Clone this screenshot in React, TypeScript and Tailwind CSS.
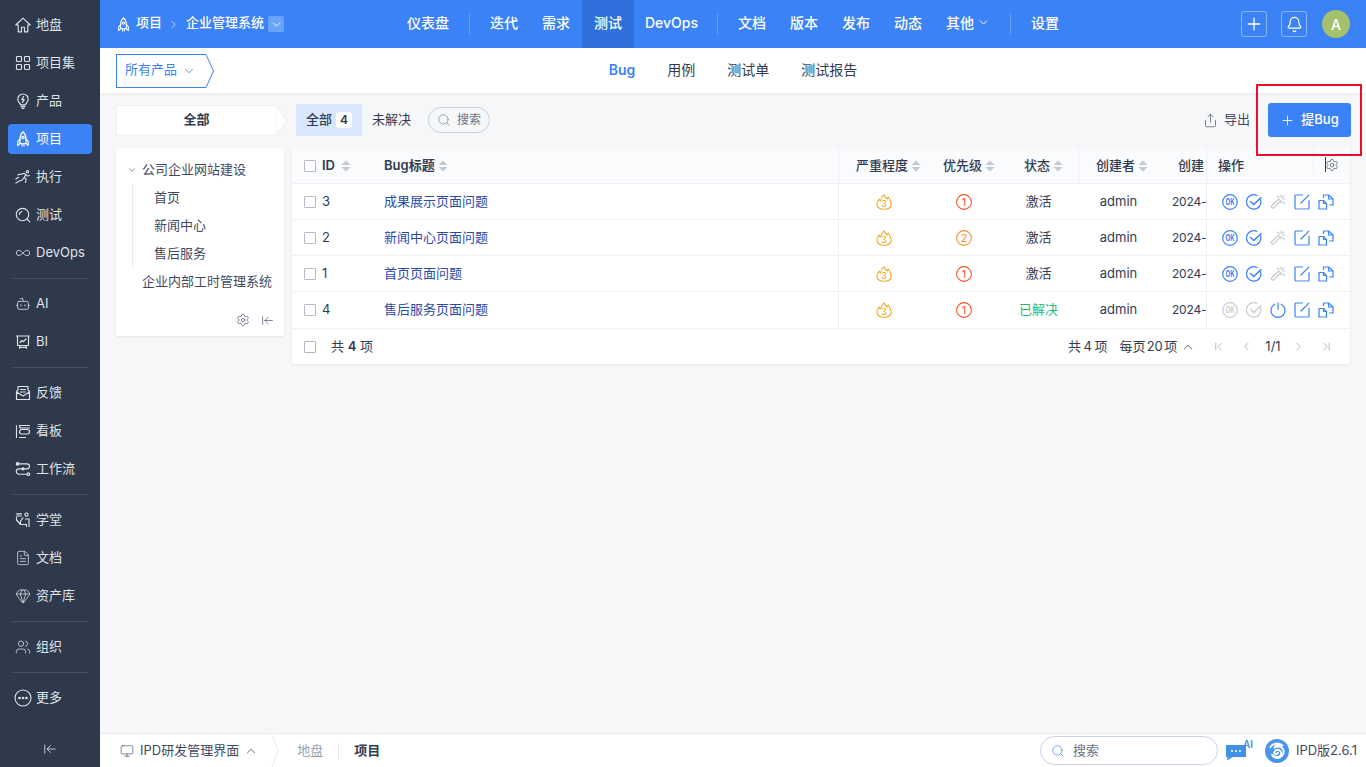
import React from "react";
import {
  Search, Infinity as InfinityIcon, Bot, FileText, Gem, Users, ArrowLeftToLine,
  ChevronDown, ChevronUp, ChevronRight, ChevronLeft, Plus, Bell, Settings, Share, Monitor, ChevronFirst, ChevronLast,
} from "lucide-react";

type P = { className?: string };
const Sv = ({ className, children, s = 16 }: P & { children: React.ReactNode; s?: number }) => (
  <svg viewBox="0 0 16 16" width={s} height={s} fill="none" stroke="currentColor" strokeWidth={1.15} strokeLinecap="round" strokeLinejoin="round" className={className}>
    {children}
  </svg>
);

const HomeI = () => (
  <Sv>
    <path d="M8 1.2 .8 8H3.200V14.800H6.500V10.200H9.500V14.800H12.800V8H15.200Z" />
  </Sv>
);
const Grid4 = () => (
  <Sv>
    <rect x="1.500" y="1.500" width="5" height="5" rx=".8" />
    <rect x="9.500" y="1.500" width="5" height="5" rx=".8" />
    <rect x="1.500" y="9.500" width="5" height="5" rx=".8" />
    <rect x="9.500" y="9.500" width="5" height="5" rx=".8" />
  </Sv>
);
const RocketUp = ({ className, s = 16 }: P & { s?: number }) => (
  <Sv className={className} s={s}>
    <path d="M8 .8C10.200 2.800 11 5.200 11 7.800V12.500H5V7.800C5 5.200 5.800 2.800 8 .8Z" />
    <circle cx="8" cy="6.500" r="1.200" />
    <path d="M5 8 2.800 10.500V14.500L5 12.500M11 8l2.200 2.500v4L11 12.500M7 13v2M9 13v2" />
  </Sv>
);
const Bulb = () => (
  <Sv>
    <path d="M5.600 11.800C5.400 10.400 2.800 9.400 2.800 6.200a5.200 5.200 0 0 1 10.400 0c0 3.200-2.600 4.200-2.800 5.600ZM6 13.600h4M7 15.300h2" />
    <path d="M8.600 3.600 6.800 6.600h2.400L7.400 9.400" />
  </Sv>
);
const Runner = () => (
  <Sv>
    <circle cx="12.500" cy="2.800" r="1.200" />
    <path d="M5.500 5.500 9 4.200l1.800 1.300-1.700 3 2 1.500-.6 3.500M9.100 8.500 7 11.200 3.200 12.200M10.800 5.500l1.200 1.500 2.500-.5M.8 10l2.700-1.700M.8 14l2-1M2.800 6l2-1" />
  </Sv>
);
const Lens = () => (
  <Sv>
    <circle cx="7.500" cy="7.500" r="6.200" />
    <path d="M12 12l2.800 2.800M4.500 7.500A3 3 0 0 1 7 4.500" />
  </Sv>
);
const Board = () => (
  <Sv>
    <path d="M1.500 2.500V14.500M4.500 2.500h10M4.500 14.500h6" />
    <rect x="4.500" y="6.500" width="10" height="4.500" rx="2.200" />
    <path d="M4.500 2.500C4.500 4 5 5 6 5h8.500" />
  </Sv>
);
const Flow = () => (
  <Sv>
    <circle cx="2.600" cy="2.800" r="1.300" fill="currentColor" />
    <path d="M4 2.800h8a2.400 2.400 0 0 1 0 5H4a2.600 2.600 0 0 0 0 5.400h8" />
    <circle cx="13.400" cy="13.200" r="1.300" />
    <circle cx="8" cy="7.800" r="1" fill="currentColor" />
  </Sv>
);
const School = () => (
  <Sv>
    <circle cx="11.500" cy="2.600" r="1.600" />
    <path d="M1.500 4h5M1.500 1.800h5M1.500 5.500v2.500l4 4.500h6v2M5.500 12.500V9L8 5.800M10.500 7h3.500v7.500" />
  </Sv>
);
const Pres = () => (
  <Sv>
    <path d="M1.500 2h13M2.500 2v9.500h11V2M5 11.500 4.500 14.500M11 11.500l.5 3M4.800 13.300h6.400" />
    <path d="M5 8.500 7 6.500l1.400 1.200L11 5" />
  </Sv>
);
const Feedback = () => (
  <Sv>
    <path d="M3 5V1.500h10V5M3 5 1.500 6.500v8h13v-8L13 5M1.500 7 8 11l6.500-4M5.500 4.500h5M5.500 7h5" />
  </Sv>
);
const More = () => (
  <svg viewBox="0 0 18 18" width="18" height="18" fill="none" stroke="currentColor" strokeWidth="1.100" className="-ml-px shrink-0">
    <circle cx="9" cy="9" r="8" />
    <circle cx="5.500" cy="9" r=".8" fill="currentColor" />
    <circle cx="9" cy="9" r=".8" fill="currentColor" />
    <circle cx="12.500" cy="9" r=".8" fill="currentColor" />
  </svg>
);

const i16 = { size: 16, strokeWidth: 1.15 };
const side: (null | { t: string; i: React.ReactNode; a?: boolean })[] = [
  { t: "地盘", i: <HomeI /> },
  { t: "项目集", i: <Grid4 /> },
  { t: "产品", i: <Bulb /> },
  { t: "项目", i: <RocketUp />, a: true },
  { t: "执行", i: <Runner /> },
  { t: "测试", i: <Lens /> },
  { t: "DevOps", i: <InfinityIcon {...i16} /> },
  null,
  { t: "AI", i: <Bot {...i16} /> },
  { t: "BI", i: <Pres /> },
  null,
  { t: "反馈", i: <Feedback /> },
  { t: "看板", i: <Board /> },
  { t: "工作流", i: <Flow /> },
  null,
  { t: "学堂", i: <School /> },
  { t: "文档", i: <FileText {...i16} /> },
  { t: "资产库", i: <Gem {...i16} /> },
  null,
  { t: "组织", i: <Users {...i16} /> },
  null,
  { t: "更多", i: <More /> },
];

const Sidebar = () => (
  <aside className="w-[100px] shrink-0 bg-[#2f394c] text-[#dfe3e9] text-[13px] pt-[6px] flex flex-col">
    {side.map((s, n) =>
      s === null ? (
        <div key={n} className="h-px my-[6px] mx-3 bg-[#465062]" />
      ) : (
        <div key={n} className="h-[38px] flex items-center">
          <div className={`mx-2 w-[84px] h-[30px] rounded-[4px] flex items-center gap-[5px] pl-[7px] ${s.a ? "bg-[#3b82f6] text-white" : ""}`}>
            <span className="w-4 h-4 flex items-center">{s.i}</span>
            <span className="pb-px">{s.t}</span>
          </div>
        </div>
      )
    )}
    <div className="mt-auto h-[36px] flex items-center justify-center">
      <ArrowLeftToLine size={14} strokeWidth={1.4} />
    </div>
  </aside>
);

const TopSep = () => <div className="w-px h-5 mx-2 bg-[#6aa3fa]" />;
const TopItem = ({ t, a, c }: { t: string; a?: boolean; c?: boolean }) => (
  <div className={`h-12 flex items-center justify-center gap-[3px] pb-[3px] ${t === "DevOps" ? "w-[75px]" : "px-3"} ${a ? "bg-[#2f70dc]" : ""}`}>
    {t}
    {c && <ChevronDown size={13} strokeWidth={1.8} />}
  </div>
);

const Header = () => (
  <header className="h-12 shrink-0 bg-[#3b82f6] text-white text-[14px] flex items-center">
    <div className="w-[295px] shrink-0 pl-4 flex items-center text-[13px] font-medium">
      <RocketUp s={15} />
      <span className="ml-[5px] pb-[2px]">项目</span>
      <ChevronRight size={13} strokeWidth={1.6} className="mx-[5px] text-[#dbe8fd]" />
      <span className="pb-[2px] ml-px">企业管理系统</span>
      <span className="ml-1 w-4 h-4 rounded-[2px] bg-[#6aa3fa] flex items-center justify-center">
        <ChevronDown size={13} strokeWidth={1.6} />
      </span>
    </div>
    <nav className="flex items-center font-medium">
      <TopItem t="仪表盘" />
      <TopSep />
      <TopItem t="迭代" />
      <TopItem t="需求" />
      <TopItem t="测试" a />
      <TopItem t="DevOps" />
      <TopSep />
      <TopItem t="文档" />
      <TopItem t="版本" />
      <TopItem t="发布" />
      <TopItem t="动态" />
      <TopItem t="其他" c />
      <TopSep />
      <TopItem t="设置" />
    </nav>
    <div className="ml-auto pr-4 flex items-center">
      <div className="w-[26px] h-[26px] rounded-[3px] border border-[#8ab6fa] flex items-center justify-center">
        <Plus size={20} strokeWidth={1.6} />
      </div>
      <div className="ml-[14px] w-[26px] h-[26px] rounded-[3px] border border-[#8ab6fa] flex items-center justify-center">
        <Bell size={17} strokeWidth={1.7} />
      </div>
      <div className="ml-[15px] w-7 h-7 rounded-full bg-[#a5c16d] flex items-center justify-center text-[14px] font-medium">A</div>
    </div>
  </header>
);

const SubBar = () => (
  <div className="h-[45px] shrink-0 bg-white shadow-[0_1px_3px_rgba(0,0,0,0.06)] grid grid-cols-[1fr_auto_1fr] items-center px-4 relative">
    <div className="flex items-center h-[34px]">
      <div className="w-[90px] h-[34px] border border-r-0 border-[#3b82f6] flex items-center pl-[8px] gap-[5px] text-[13px] text-[#3b82f6]">
        <span className="pb-[2px]">所有产品</span>
        <ChevronDown size={14} strokeWidth={1.5} />
      </div>
      <svg width="8" height="34" viewBox="0 0 8 34" fill="none" className="shrink-0">
        <path d="M0 .5 7.500 17 0 33.500" stroke="#3b82f6" />
      </svg>
    </div>
    <div className="flex items-center gap-8 text-[14px] text-[#313c52] pb-[2px]">
      <span className="text-[#3b82f6] font-semibold">Bug</span>
      <span>用例</span>
      <span>测试单</span>
      <span>测试报告</span>
    </div>
    <div />
  </div>
);

const Sort = () => (
  <svg width="10" height="12" viewBox="0 0 10 12" className="shrink-0">
    <path d="M5 0.500 9.500 5H.5ZM5 11.500.5 7h9Z" fill="#c4c8cf" />
  </svg>
);
const Check = ({ className = "" }: P) => <span className={`w-3 h-3 shrink-0 border border-[#b4bac5] rounded-[1px] bg-white ${className}`} />;

const Fire = () => (
  <svg viewBox="0 0 16 16" width="16" height="16" fill="none" stroke="#f5a623" strokeWidth="1.100" strokeLinejoin="round">
    <path d="M8 .8C8.800 3 10 3.800 11 5 11.500 4.400 12 3.800 12.200 3 14 5 15.200 7.500 15.200 10 15.200 13.500 12 15.300 8 15.300S.8 13.500.8 10C.8 8 2 6.500 3.200 5.200 3.500 6 3.800 6.500 4.400 7 4.800 4.500 6 2.500 8 .8Z" />
    <text x="8" y="13.300" textAnchor="middle" fontSize="8.500" fontWeight="500" fill="#f5a623" stroke="none">3</text>
  </svg>
);
const Pri = ({ n }: { n: number }) => (
  <svg viewBox="0 0 16 16" width="16" height="16" fill="none" stroke={n === 1 ? "#f0512d" : "#f5902e"} strokeWidth="1.100">
    <circle cx="8" cy="8" r="7.400" />
    <text x="8" y="12" textAnchor="middle" fontSize="11" fill={n === 1 ? "#f0512d" : "#f5902e"} stroke="none">{n}</text>
  </svg>
);

const OkI = ({ c }: { c: string }) => (
  <svg viewBox="0 0 16 16" width="16" height="16" fill="none" stroke={c} strokeWidth="1.200">
    <circle cx="8" cy="8" r="7.300" />
    <text x="8" y="11" textAnchor="middle" fontSize="8.500" fontWeight="700" textLength="9" lengthAdjust="spacingAndGlyphs" fill={c} stroke="none">OK</text>
  </svg>
);
const CheckI = ({ c }: { c: string }) => (
  <svg viewBox="0 0 16 16" width="16" height="16" fill="none" stroke={c} strokeLinecap="round" strokeWidth="1.200">
    <path d="M14.500 5.500A7.200 7.200 0 1 1 11 1.500" />
    <path d="M4.500 7.500 7.800 10.500 15 3.500" strokeWidth="1.400" />
  </svg>
);
const Wand = () => (
  <svg viewBox="0 0 16 16" width="16" height="16" fill="none" stroke="#c9ccd2" strokeLinecap="round" strokeWidth="1.200">
    <path d="M1 12.500 8.500 5l2 2L3 14.500Z" />
    <path d="M11 .8v2.400M11 6.500v2.500M14.800 5h-2.400M7.500 2l1.500 1.500M14 1.800l-1.500 1.500M13 8l1.500 1.500" />
  </svg>
);
const Power = () => (
  <svg viewBox="0 0 16 16" width="16" height="16" fill="none" stroke="#3b82f6" strokeLinecap="round" strokeWidth="1.200">
    <path d="M4.800 2.200a7 7 0 1 0 6.400 0M8 .8v6.400" />
  </svg>
);
const Edit = () => (
  <svg viewBox="0 0 16 16" width="16" height="16" fill="none" stroke="#3b82f6" strokeLinecap="round" strokeWidth="1.200">
    <path d="M8.500 1H2a1 1 0 0 0-1 1v12a1 1 0 0 0 1 1h12a1 1 0 0 0 1-1V6.500" />
    <path d="M7 9 14.800 1.200" />
    <path d="M2 15.500h12" stroke="#a9c9fb" />
  </svg>
);
const Copy = () => (
  <svg viewBox="0 0 16 16" width="16" height="16" fill="none" stroke="#3b82f6" strokeLinejoin="round" strokeWidth="1.200">
    <path d="M1 6.500h4.500L8.500 9.500v5.500H1Z" />
    <path d="M5.500 4V1h5L15 5v6h-4" />
    <path d="M10.500 1v4H15M5.500 6.500v3h3" />
    <path d="M2 15.800h6" stroke="#a9c9fb" />
  </svg>
);

const gridCls = "grid grid-cols-[84px_463px_91px_68px_81px_79px_48px_144px] items-center";

const rows = [
  { id: 3, t: "成果展示页面问题", p: 1, s: "激活" },
  { id: 2, t: "新闻中心页面问题", p: 2, s: "激活" },
  { id: 1, t: "首页页面问题", p: 1, s: "激活" },
  { id: 4, t: "售后服务页面问题", p: 1, s: "已解决" },
];

const Table = () => (
  <section className="flex-1 h-[216px] bg-white rounded-[2px] shadow-[0_1px_3px_rgba(0,0,0,0.08)] text-[13px] text-[#313c52]">
    <div className={`${gridCls} h-9 bg-[#fafbfd] border-b border-[#eef0f3]`}>
      <div className="flex items-center pl-3 gap-[6px] font-semibold">
        <Check />
        <span>ID</span>
        <Sort />
      </div>
      <div className="pl-2 flex items-center gap-[3px] font-semibold h-full border-r border-[#eef0f3]">
        <span>Bug标题</span>
        <Sort />
      </div>
      <div className="h-full flex items-center gap-[3px] font-medium pl-[17px]">
        <span>严重程度</span>
        <Sort />
      </div>
      <div className="h-full flex items-center gap-[3px] font-medium pl-[13px]">
        <span>优先级</span>
        <Sort />
      </div>
      <div className="h-full flex items-center gap-[3px] font-medium pl-[26px] border-r border-[#eef0f3]">
        <span>状态</span>
        <Sort />
      </div>
      <div className="h-full flex items-center gap-[3px] font-medium pl-[17px]">
        <span>创建者</span>
        <Sort />
      </div>
      <div className="pl-[20px] font-medium overflow-hidden whitespace-nowrap">创建</div>
      <div className="h-full border-l border-[#eef0f3] pl-[11px] flex items-center relative font-medium">
        操作
        <span className="absolute left-[106px] top-0 h-[26px] border-l border-[#eef0f3]" />
        <span className="absolute left-[118px] top-[9px] h-[15px] border-l border-[#313c52]" />
        <Settings size={14} strokeWidth={1.1} className="absolute left-[118px] top-[10px]" />
      </div>
    </div>
    {rows.map((r, n) => (
      <div key={r.id} className={`${gridCls} ${n === 3 ? "h-[37px]" : "h-9"} border-b border-[#eef0f3]`}>
        <div className="flex items-center pl-3 gap-[6px]">
          <Check />
          <span>{r.id}</span>
        </div>
        <div className="pl-2 h-full flex items-center border-r border-[#eef0f3] text-[#2a4aa6]">{r.t}</div>
        <div className="flex justify-center -ml-[1px]"><Fire /></div>
        <div className="flex justify-center"><Pri n={r.p} /></div>
        <div className={`h-full flex items-center justify-center ${r.s === "已解决" ? "text-[#1fb97e]" : ""}`}>{r.s}</div>
        <div className="text-center">admin</div>
        <div className="pl-[14px] whitespace-nowrap text-[12px] tracking-[-0.2px]">2024-</div>
        <div className="h-full border-l border-[#eef0f3] pl-[15px] flex items-center gap-2">
          <OkI c={r.s === "已解决" ? "#c9ccd2" : "#3b82f6"} />
          <CheckI c={r.s === "已解决" ? "#c9ccd2" : "#3b82f6"} />
          {r.s === "已解决" ? <Power /> : <Wand />}
          <Edit />
          <Copy />
        </div>
      </div>
    ))}
    <div className="h-[35px] flex items-center pl-3 pr-[17px]">
      <Check />
      <span className="ml-[15px]">共 <b className="font-semibold">4</b> 项</span>
      <span className="ml-auto [word-spacing:-1px]">共 4 项</span>
      <span className="ml-[12px] [word-spacing:-2px] tracking-[-0.15px]">每页 20 项</span>
      <ChevronUp size={14} strokeWidth={1.4} className="ml-[4px] mr-[17px]" />
      <ChevronFirst size={13} strokeWidth={1.2} className="text-[#8a92a0]" />
      <ChevronLeft size={13} strokeWidth={1.2} className="ml-[15px] text-[#8a92a0]" />
      <span className="ml-[10px] w-[20px] text-center">1/1</span>
      <ChevronRight size={13} strokeWidth={1.2} className="ml-[9px] text-[#8a92a0]" />
      <ChevronLast size={13} strokeWidth={1.2} className="ml-[15px] text-[#8a92a0]" />
    </div>
  </section>
);

const Tree = () => (
  <section className="w-[168px] h-[188px] mr-2 shrink-0 bg-white rounded-[2px] shadow-[0_1px_3px_rgba(0,0,0,0.08)] text-[13px] text-[#3f4a5f] pt-2 flex flex-col">
    <div className="h-7 flex items-center pl-[11px] gap-[5px]">
      <ChevronDown size={10} strokeWidth={1.5} />
      公司企业网站建设
    </div>
    <div className="ml-4 border-l border-[#e6e9ee]">
      {["首页", "新闻中心", "售后服务"].map((t) => (
        <div key={t} className="h-7 flex items-center pl-[21px]">{t}</div>
      ))}
    </div>
    <div className="h-7 flex items-center pl-[26px] whitespace-nowrap">企业内部工时管理系统</div>
    <div className="mt-auto h-[32px] flex items-center justify-end gap-[11px] pr-[10px]">
      <Settings size={14} strokeWidth={1.1} />
      <ArrowLeftToLine size={13} strokeWidth={1.2} />
    </div>
  </section>
);

const Toolbar = () => (
  <div className="h-[34px] flex items-center text-[13px] text-[#313c52]">
    <div className="w-[180px] shrink-0 flex items-center">
      <div className="w-[160px] h-[31px] bg-white border border-r-0 border-[#eef0f3] flex items-center justify-center font-semibold">全部</div>
      <svg width="11" height="31" viewBox="0 0 11 31" className="shrink-0">
        <path d="M0 .5 10.500 15.500 0 30.500Z" fill="#fff" stroke="#eef0f3" />
      </svg>
    </div>
    <div className="w-[66px] h-8 rounded-[2px] bg-[#d8e7fd] flex items-center pl-[10px] gap-[4px] font-medium">
      全部
      <span className="w-4 h-4 rounded-[3px] bg-white flex items-center justify-center text-[12px] font-semibold">4</span>
    </div>
    <span className="ml-[10px]">未解决</span>
    <div className="ml-[17px] w-[62px] h-[26px] rounded-full border border-[#c9cfdc] flex items-center pl-2 gap-[6px] text-[12px] text-[#6b7384]">
      <Search size={14} strokeWidth={1.1} />
      搜索
    </div>
    <div className="ml-auto flex items-center gap-[6px] text-[#3f4a5f]">
      <Share size={15} strokeWidth={1.1} />
      导出
    </div>
    <div className="ml-[18px] -mr-px w-[83px] h-[34px] rounded-[3px] bg-[#3b82f6] text-white flex items-center justify-center gap-[6px] font-medium">
      <Plus size={15} strokeWidth={1.4} />
      提Bug
    </div>
  </div>
);

const Logo = () => (
  <svg viewBox="0 0 24 24" width="24" height="24">
    <circle cx="12" cy="12" r="12" fill="#4a94ef" />
    <path d="M5 9c2-5 9-6 13-2-4-2-8-1-9 2 2-2 7-2 9 1 2 4-1 9-6 9-3 0-5-2-5-4 1 2 3 3 5 3 3 0 5-2 4-5-1-2-4-3-6-1-1 1-1 3 1 3 1 0 2-1 2-2" fill="none" stroke="#fff" strokeWidth="1.800" />
  </svg>
);

const Bottom = () => (
  <footer className="h-[34px] shrink-0 bg-white border-t border-[#e8eaee] flex items-center text-[13px] text-[#3f4a5f] relative">
    <div className="flex items-center pl-5">
      <Monitor size={14} strokeWidth={1.1} />
      <span className="ml-[6px]">IPD研发管理界面</span>
      <ChevronUp size={14} strokeWidth={1.4} className="ml-[5px]" />
    </div>
    <svg width="8" height="34" viewBox="0 0 8 34" fill="none" className="ml-[13px] shrink-0">
      <path d="M.5 0 7.500 17 .5 34" stroke="#e8eaee" />
    </svg>
    <span className="ml-[18px] text-[#9aa1ad]">地盘</span>
    <span className="mx-[15px] w-px h-4 bg-[#e3e6eb]" />
    <span className="font-semibold text-[#313c52]">项目</span>
    <div className="ml-auto flex items-center pr-[9px]">
      <div className="w-[178px] h-[29px] rounded-full border border-[#c9d3e6] flex items-center pl-[10px] gap-[8px] text-[#6b7384]">
        <Search size={14} strokeWidth={1.2} className="text-[#3b82f6]" />
        搜索
      </div>
      <div className="ml-[7px] relative w-[28px] h-[22px]">
        <svg viewBox="0 0 22 18" width="22" height="18" className="absolute left-0 top-[3px]">
          <path d="M1 2h20v12H8l-6 3.500 .5-3.500H1Z" fill="#3f92e8" />
          <circle cx="7" cy="8" r="1" fill="#fff" />
          <circle cx="11" cy="8" r="1" fill="#fff" />
          <circle cx="15" cy="8" r="1" fill="#fff" />
        </svg>
        <span className="absolute left-[18px] -top-[3px] text-[10px] font-semibold text-[#3f92e8]">AI</span>
      </div>
      <div className="ml-3"><Logo /></div>
      <span className="ml-[7px]">IPD版2.6.1</span>
    </div>
  </footer>
);

export default function App() {
  return (
    <div className="[font-family:Inter,Noto_Sans_CJK_SC,sans-serif] relative w-full h-[767px] overflow-hidden flex bg-[#f6f7f9]">
      <Sidebar />
      <main className="flex-1 min-w-0 flex flex-col">
        <Header />
        <SubBar />
        <div className="flex-1 px-4 pt-[10px]">
          <Toolbar />
          <div className="mt-[11px] flex items-start">
            <Tree />
            <Table />
          </div>
        </div>
        <Bottom />
      </main>
      <div className="absolute left-[1256px] top-[84px] w-[106px] h-[72px] border-2 border-[#e8112d] pointer-events-none" />
    </div>
  );
}
